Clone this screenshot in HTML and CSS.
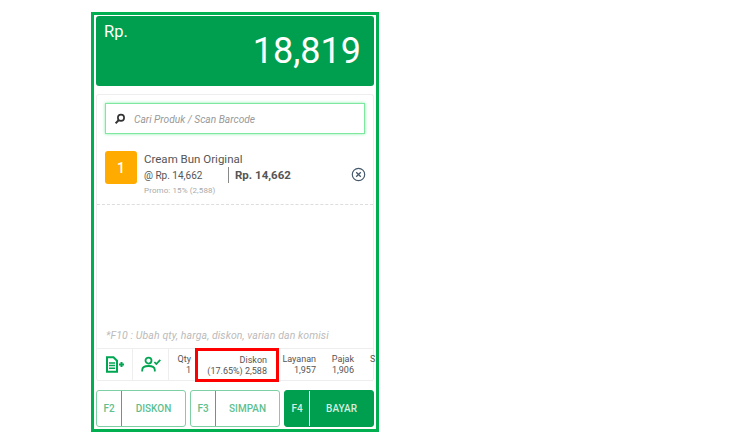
FILE: index.html
```html
<html>

<head>
    <meta charset="UTF-8" />
    <title>Kasir</title>
    <link rel="stylesheet" href="styles.css">
</head>

<body>
    <div class="frame">
        <div class="total">
            <span class="total-rp">Rp.</span>
            <span class="total-num">18,819</span>
        </div>
        <div class="panel">
            <div class="search">
                <svg class="search-icon" width="12" height="12" viewBox="0 0 12 12">
                    <circle cx="7" cy="4.8" r="3.1" fill="none" stroke="#333" stroke-width="1.7" />
                    <path d="M4.8 7 L1.6 10.4" stroke="#333" stroke-width="2" fill="none" />
                </svg>
                <span class="search-text">Cari Produk / Scan Barcode</span>
            </div>
            <div class="item">
                <div class="qty-box">1</div>
                <div class="item-info">
                    <div class="item-name">Cream Bun Original</div>
                    <div class="item-prices">
                        <span class="item-unit">@ Rp. 14,662</span>
                        <span class="item-total">Rp. 14,662</span>
                    </div>
                    <div class="item-promo">Promo: 15% (2,588)</div>
                </div>
                <svg class="item-remove" width="15" height="15" viewBox="0 0 15 15">
                    <circle cx="7.5" cy="7.5" r="6.2" fill="none" stroke="#46586b" stroke-width="1.2" />
                    <path d="M5.2 5.2 L9.8 9.8 M9.8 5.2 L5.2 9.8" stroke="#46586b" stroke-width="1.3" fill="none" />
                </svg>
            </div>
            <div class="spacer"></div>
            <div class="hint">*F10 : Ubah qty, harga, diskon, varian dan komisi</div>
            <div class="summary">
                <div class="sum-icon">
                    <svg width="20" height="17" viewBox="0 0 20 17">
                        <path d="M2 1.2 H8.5 L12 4.7 V15.8 H2 Z" fill="none" stroke="#00a651" stroke-width="2" />
                        <path d="M4 7 H10 M4 9.6 H10 M4 12.2 H10" stroke="#00a651" stroke-width="1.5" />
                        <path d="M14 8.5 H19 M16.5 6 V11" stroke="#00a651" stroke-width="2" />
                    </svg>
                </div>
                <div class="sum-icon">
                    <svg width="20" height="17" viewBox="0 0 20 17">
                        <circle cx="7.5" cy="4.6" r="3" fill="none" stroke="#00a651" stroke-width="1.8" />
                        <path d="M1.2 15.5 V14 C1.2 11.2 4 10 7.5 10 C11 10 13.8 11.2 13.8 14 V15.5" fill="none" stroke="#00a651" stroke-width="1.8" />
                        <path d="M13.4 6 L15.3 8 L19.3 3.8" fill="none" stroke="#00a651" stroke-width="1.8" />
                    </svg>
                </div>
                <div class="sum-cell sum-qty">
                    <div>Qty</div>
                    <div>1</div>
                </div>
                <div class="sum-cell sum-diskon">
                    <div>Diskon</div>
                    <div>(17.65%) 2,588</div>
                </div>
                <div class="sum-cell sum-layanan">
                    <div>Layanan</div>
                    <div>1,957</div>
                </div>
                <div class="sum-cell sum-pajak">
                    <div>Pajak</div>
                    <div>1,906</div>
                </div>
                <div class="sum-cell sum-sub">
                    <div>S</div>
                </div>
            </div>
        </div>
        <div class="actions">
            <div class="btn">
                <span class="btn-key">F2</span>
                <span class="btn-label">DISKON</span>
            </div>
            <div class="btn">
                <span class="btn-key">F3</span>
                <span class="btn-label">SIMPAN</span>
            </div>
            <div class="btn btn-pay">
                <span class="btn-key">F4</span>
                <span class="btn-label">BAYAR</span>
            </div>
        </div>
    </div>
</body>

</html>
```

FILE: styles.css
```css
body {
    margin: 0;
    background-color: #fff;
    font-family: Roboto, sans-serif;
    color: #555;
}

.frame {
    width: 278px;
    height: 411px;
    margin: 12px 0 0 91px;
    border: 3px solid #00b050;
    padding: 1px 2px 2px 2px;
    display: flex;
    flex-direction: column;
}

.total {
    height: 70px;
    background-color: #009f4f;
    border-radius: 3px;
    color: #fff;
    display: flex;
    justify-content: space-between;
    padding: 0 13px 0 8px;
    flex-shrink: 0;
}

.total-rp {
    font-size: 16.5px;
    line-height: 18px;
    margin-top: 7px;
}

.total-num {
    font-size: 36px;
    line-height: 42px;
    margin-top: 14px;
}

.panel {
    flex: 1;
    margin-top: 8px;
    border: 1px solid #eee;
    border-bottom: 0;
    border-radius: 3px;
    display: flex;
    flex-direction: column;
    min-height: 0;
}

.search {
    height: 28px;
    margin: 8px 8px 0 8px;
    border: 1px solid #7fe8a0;
    box-shadow: 0 0 3px #8aeeaa;
    display: flex;
    align-items: center;
    padding: 1px 0 0 8px;
}

.search-icon {
    margin-right: 8px;
}

.search-text {
    font-size: 10.2px;
    font-style: italic;
    color: #999;
}

.item {
    height: 53px;
    margin-top: 17px;
    border-bottom: 1px dashed #ddd;
    display: flex;
    padding-left: 8px;
}

.qty-box {
    width: 32px;
    height: 33px;
    background-color: #ffab00;
    border-radius: 3px;
    color: #fff;
    font-size: 14px;
    font-weight: 500;
    display: flex;
    align-items: center;
    justify-content: center;
}

.item-info {
    margin-left: 7px;
    flex: 1;
}

.item-name {
    font-size: 11.5px;
    line-height: 14px;
    margin-top: 1px;
}

.item-prices {
    display: flex;
    height: 16px;
    margin-top: 1px;
    align-items: center;
}

.item-unit {
    font-size: 10px;
    width: 84px;
}

.item-total {
    font-size: 11.5px;
    font-weight: 700;
    border-left: 1px solid #888;
    padding-left: 6px;
    line-height: 16px;
}

.item-promo {
    font-size: 8px;
    color: #aaa;
    margin-top: 3px;
    letter-spacing: 0.1px;
}

.item-remove {
    margin: 16px 7px 0 0;
}

.spacer {
    flex: 1;
}

.hint {
    font-size: 10.5px;
    font-style: italic;
    color: #bbb;
    padding-left: 9px;
    height: 20px;
    line-height: 16px;
    letter-spacing: 0.1px;
}

.summary {
    height: 33px;
    display: flex;
    border-top: 1px solid #eee;
    border-bottom: 1px solid #eee;
    flex-shrink: 0;
    box-sizing: border-box;
}

.sum-icon {
    width: 35px;
    border-right: 1px solid #eee;
    display: flex;
    align-items: center;
    justify-content: center;
    flex-shrink: 0;
}

.sum-cell {
    font-size: 9px;
    line-height: 11px;
    text-align: right;
    white-space: nowrap;
    flex-shrink: 0;
    padding-top: 5px;
    color: #555;
    box-sizing: border-box;
}

.sum-qty {
    width: 26px;
    padding-right: 4px;
}

.sum-diskon {
    width: 84px;
    height: 34px;
    margin-top: -1px;
    padding: 4px 9px 0 0;
    border: 3px solid #f00;
}

.sum-layanan {
    width: 37px;
}

.sum-pajak {
    width: 38px;
}

.sum-sub {
    width: 20px;
    padding-left: 16px;
    text-align: left;
}

.actions {
    display: flex;
    gap: 4px;
    height: 37px;
    margin-top: 9px;
    flex-shrink: 0;
}

.btn {
    flex: 1;
    border: 1px solid #7fcfa5;
    border-radius: 3px;
    display: flex;
    align-items: center;
    color: #5fbf8f;
    font-size: 10px;
    font-weight: 500;
}

.btn-key {
    width: 24px;
    height: 100%;
    border-right: 1px solid #3fae78;
    display: flex;
    align-items: center;
    justify-content: center;
}

.btn-label {
    flex: 1;
    text-align: center;
}

.btn-pay {
    background-color: #009f4f;
    border-color: #009f4f;
    color: #d5eee0;
}

.btn-pay .btn-key {
    border-right-color: #fff;
}
```
